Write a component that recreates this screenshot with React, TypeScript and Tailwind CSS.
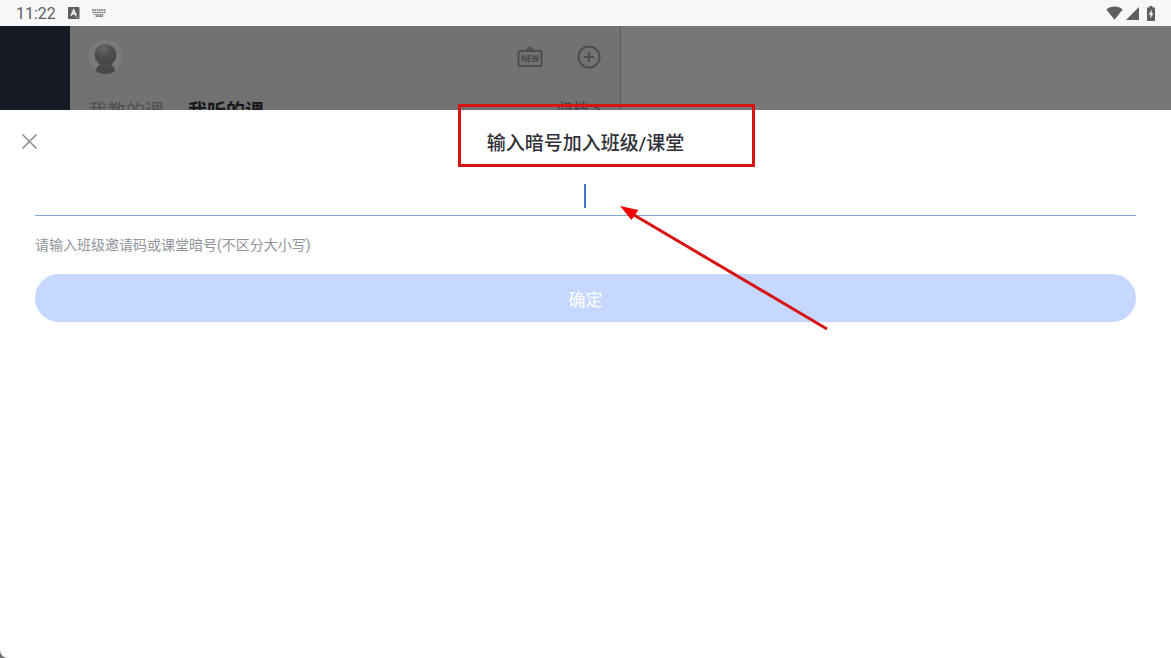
import React, { useState } from 'react';

function StatusBar() {
  return (
    <header className="flex h-[26px] shrink-0 items-center justify-between bg-[#f6f7f9] px-4 text-[#5f5f61]">
      <div className="flex items-center">
        <time className="pt-0.5 text-base leading-6">11:22</time>
        <svg className="ml-3 h-3 w-3" viewBox="0 0 12 12" aria-hidden="true">
          <rect x="0" y="0" width="11.5" height="12" rx="1" fill="#5f5f61" />
          <path d="M3.1 8.6 5.7 3 8.3 8.6M4.2 6.8h3" fill="none" stroke="#f6f7f9" strokeWidth="1.5" />
          <path d="M7.5 10.2h2.5" stroke="#c9c9cb" strokeWidth="0.8" />
        </svg>
        <svg className="ml-3 h-2 w-[14px]" viewBox="0 0 14 8" aria-hidden="true">
          <g stroke="#6f6f71" strokeWidth="1.4">
            <path d="M0 1h14M0.5 3.4h13" strokeDasharray="1.7 0.6" />
            <path d="M1.5 5.3h11" strokeDasharray="1.6 0.6" strokeWidth="1" />
            <path d="M3.5 7.1h7.5" />
          </g>
        </svg>
      </div>
      <div className="flex items-center">
        <svg className="h-[14px] w-[17px]" viewBox="0 0 17 14" aria-hidden="true">
          <path d="M0.3 3.4C2.5 1.5 5.2.5 8.5.5s6 1 8.2 2.9L8.5 13.7z" fill="#5f5f61" />
        </svg>
        <svg className="ml-[3px] h-[13px] w-[13px]" viewBox="0 0 13 13" aria-hidden="true">
          <path d="M13 0v13H0z" fill="#5f5f61" />
        </svg>
        <svg className="ml-2 h-[15px] w-2" viewBox="0 0 8 15" aria-hidden="true">
          <path d="M2.5 0h3v1.5H8V14.2a.8.8 0 0 1-.8.8H.8a.8.8 0 0 1-.8-.8V1.5h2.5z" fill="#5f5f61" />
          <path d="M4.7 3.5 1.7 8.8h1.9v3.6l2.8-5H4.7z" fill="#f6f7f9" />
        </svg>
      </div>
    </header>
  );
}

function Avatar() {
  return (
    <svg className="h-9 w-9" viewBox="0 0 36 36" aria-hidden="true">
      <defs>
        <radialGradient id="head" cx="40%" cy="20%" r="80%">
          <stop offset="0" stopColor="#686868" />
          <stop offset="0.5" stopColor="#4d4d4d" />
          <stop offset="1" stopColor="#464646" />
        </radialGradient>
        <clipPath id="face">
          <circle cx="17.5" cy="17.5" r="17.5" />
        </clipPath>
      </defs>
      <circle cx="17.5" cy="17.5" r="17" fill="#7a7a7a" />
      <path d="M7 36C7 28 12 24 17.5 24S28 28 28 36z" fill="#494949" clipPath="url(#face)" />
      <circle cx="17.5" cy="16" r="10.8" fill="url(#head)" stroke="#5c5c5c" strokeWidth="0.4" />
    </svg>
  );
}

// Course list behind the sheet, already dimmed
function CoursePage() {
  return (
    <div className="flex h-[84px] shrink-0 overflow-hidden bg-[#777777]">
      <nav className="w-[70px] shrink-0 bg-[#161a24]" />
      <section className="w-[551px] shrink-0 border-r border-[#5b5b5b] bg-[#727272] pl-[18px] pr-[19px]">
        <div className="flex h-[62px] items-center justify-between">
          <Avatar />
          <div className="flex items-center gap-[34px]">
            <button type="button" aria-label="NEW">
              <svg className="block h-6 w-[26px]" viewBox="0 0 26 24">
                <g fill="none" stroke="#4b4d51" strokeWidth="2" strokeLinejoin="round">
                  <rect x="1.5" y="6" width="23" height="15" rx="1.5" />
                  <path d="M9 6 13 2.5 17 6" />
                </g>
                <text x="13" y="16.5" textAnchor="middle" fontSize="8.5" fontWeight="900" fill="#4b4d51">NEW</text>
              </svg>
            </button>
            <button type="button" aria-label="添加">
              <svg className="block h-6 w-6" viewBox="0 0 24 24" fill="none" stroke="#4b4d51" strokeWidth="2">
                <circle cx="12" cy="12" r="10.5" />
                <path d="M12 7v10M7 12h10" />
              </svg>
            </button>
          </div>
        </div>
        <div className="flex items-start justify-between pt-[10px]">
          <div className="flex gap-6 text-[19px] leading-7">
            <button type="button" className="text-[#505154]">我教的课</button>
            <button type="button" className="font-bold text-[#17181b]">我听的课</button>
          </div>
          <button type="button" className="text-base leading-6 text-[#45464a]">归档 &gt;</button>
        </div>
      </section>
    </div>
  );
}

function JoinSheet() {
  const [code, setCode] = useState('');

  return (
    <main className="relative flex-1 rounded-bl-lg bg-white">
      <div className="grid h-16 grid-cols-[60px_1fr_60px] items-center">
        <button type="button" aria-label="关闭" className="ml-[22px] w-4">
          <svg className="block h-4 w-4" viewBox="0 0 16 16" fill="none" stroke="#888b91" strokeWidth="1.5">
            <path d="M.5.5l14 14M14.5.5l-14 14" />
          </svg>
        </button>
        <h1 className="pt-1 text-center text-[19px] font-medium leading-7 text-[#303138]">输入暗号加入班级/课堂</h1>
      </div>

      <form className="px-[35px]" onSubmit={(e) => e.preventDefault()}>
        <div className="relative border-b border-[#83a9d2]">
          <input
            id="code"
            value={code}
            onChange={(e) => setCode(e.target.value)}
            className="block h-[41px] w-full bg-transparent text-center text-xl text-[#303138] caret-[#4778d0] outline-none"
          />
          {!code && <span className="pointer-events-none absolute left-1/2 top-[10px] -ml-0.5 h-6 w-0.5 bg-[#4778d0]" />}
        </div>
        <label htmlFor="code" className="mt-[17px] block text-sm leading-6 text-[#92949a]">
          请输入班级邀请码或课堂暗号(不区分大小写)
        </label>
        <button type="submit" className="mt-[17px] block h-12 w-full rounded-full bg-[#c6d8ff] pt-1 text-[17px] leading-7 text-white">
          确定
        </button>
      </form>

      <div className="pointer-events-none absolute -top-1.5 left-1/2 -ml-32 h-[63px] w-[297px] border-[3px] border-[#d71414]" />
      <svg className="pointer-events-none absolute left-1/2 top-24 ml-[34px] h-[125px] w-[210px]" viewBox="0 0 210 125" aria-hidden="true">
        <path d="M14 9 207 123" stroke="#d71414" strokeWidth="3" />
        <path d="M0 0 18.5 4 11.5 14z" fill="#f40000" />
      </svg>
    </main>
  );
}

export default function App() {
  return (
    <div className="flex min-h-screen flex-col bg-[#777777] font-[Roboto,'Noto_Sans_CJK_SC',sans-serif]">
      <StatusBar />
      <CoursePage />
      <JoinSheet />
    </div>
  );
}
